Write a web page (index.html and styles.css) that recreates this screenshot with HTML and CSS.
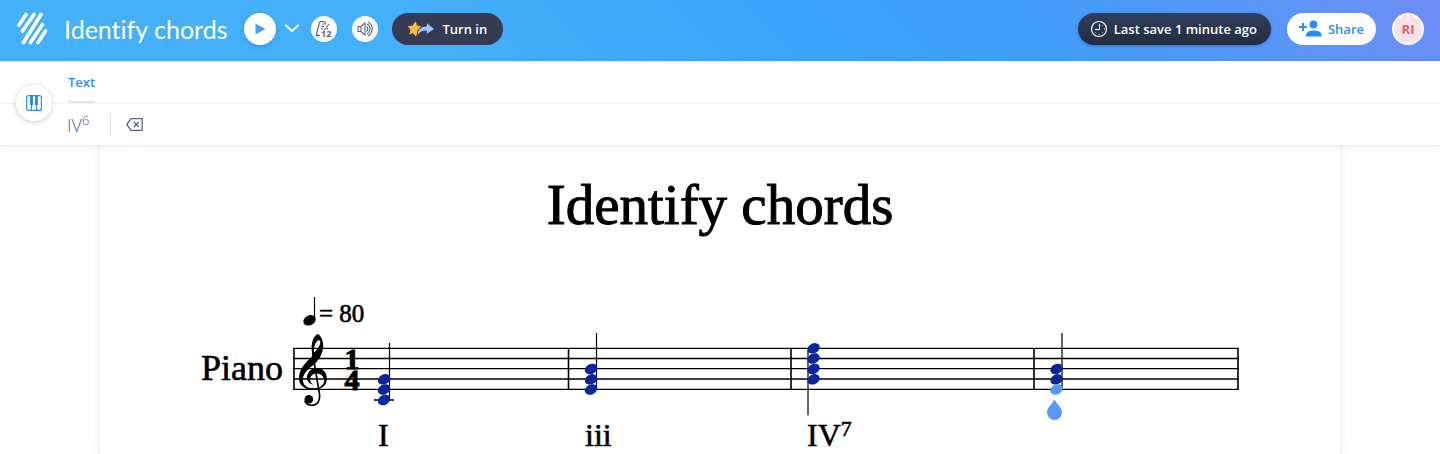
FILE: index.html
```html
<!DOCTYPE html>
<html lang="en">
  <head>
    <meta charset="UTF-8" />
    <meta name="viewport" content="width=device-width, initial-scale=1.0" />
    <title>Identify chords</title>
    <link rel="stylesheet" href="styles.css">
  </head>
  <body>
    <header class="topbar">
      <a href="#" class="logo" aria-label="Home">
        <svg width="32" height="34" viewBox="0 0 32 34" fill="none" stroke="#fff" stroke-width="3.6" stroke-linecap="round">
          <path d="M3 13 10 2.500M6.500 19 18 2.500M7.500 30.500 25 2.500M14.500 30.500 26.500 12.500M22 30.500 29.500 19" />
        </svg>
      </a>
      <h2 class="doc-title">Identify chords</h2>
      <div class="player">
        <button type="button" class="round play" aria-label="Play">
          <svg width="12" height="12" viewBox="0 0 12 12"><path d="M1.500 0.500 11.500 6 1.500 11.500z" fill="#4f9cfb" /></svg>
        </button>
        <button type="button" class="arrow" aria-label="Playback options">
          <svg width="16" height="9" viewBox="0 0 16 9" fill="none" stroke="#fff" stroke-width="2" stroke-linecap="round" stroke-linejoin="round"><path d="M2 1.500 8 7 14 1.500" /></svg>
        </button>
        <button type="button" class="round small" aria-label="Metronome">
          <svg width="20" height="22" viewBox="0 -2 20 22" fill="none" stroke="#5b6485" stroke-width="1.100">
            <path d="M3 12.500 5.500 2.500Q5.800 1.500 7 1.500H10Q11 1.500 11.200 2.500L11.500 4.500M3 12.500 2.200 15.500H6M8 4H10.500M7.500 6.500H10M7 9H9.500M10 10.500 15 4M12 6.500 14 9.500" />
            <path d="M3.500 13.800V17.200L5.500 15.500z" fill="#5b6485" stroke="none" />
            <text x="7" y="17" class="count">12</text>
          </svg>
        </button>
        <button type="button" class="round small" aria-label="Volume">
          <svg width="16" height="16" viewBox="0 0 16 16" fill="none" stroke="#5b6485" stroke-width="1.100">
            <path d="M1 5.500H4V10.500H1zM4 5.500 8 2V14L4 10.500M9.500 5.500Q12 8 9.500 10.500M10 3Q13.500 5 13 8.500 12.500 11.500 10 13M11 1Q15.500 3.500 15.300 8.500 14.500 13 11 15" />
          </svg>
        </button>
      </div>
      <button type="button" class="pill turn-in">
        <svg width="28" height="16" viewBox="0 0 28 16">
          <path d="M7.500 1 8.500 5 12.500 5.500 9.500 9 8 15 5 11.500 2 13 3 9 0.500 5.500 5 5z" fill="#f9bb43" stroke="#f9bb43" stroke-linejoin="round" />
          <path d="M9 15.500Q9 5 18.500 5V1.500L26.500 8 18.500 13.500V10Q12 9.500 9 15.500z" fill="#a2c1fb" stroke="#343b52" stroke-width="0.800" />
        </svg>
        Turn in
      </button>
      <div class="actions">
        <button type="button" class="pill saved">
          <svg width="18" height="18" viewBox="0 0 18 18" fill="none" stroke="#fff">
            <circle cx="9" cy="9" r="7.500" stroke-width="1.200" />
            <path d="M9.500 4V9.500H5" />
            <path d="M9 14V15M14 9H15M12.500 5.500 13 5M12.500 12.500 13 13M5 13 5.500 12.500" />
          </svg>
          Last save 1 minute ago
        </button>
        <button type="button" class="pill share">
          <svg width="23" height="17" viewBox="0 0 23 17" fill="#2b8df3">
            <circle cx="14.500" cy="4.500" r="4" />
            <path d="M7 16.500V14.500Q8 10.500 14.800 10.500T22.500 14.500V16.500z" />
            <path d="M3 3H5V6H8V8H5V11H3V8H0V6H3z" />
          </svg>
          Share
        </button>
        <button type="button" class="avatar">RI</button>
      </div>
    </header>

    <nav class="toolbar">
      <button type="button" class="instrument" aria-label="Piano">
        <svg width="16" height="16" viewBox="0 0 16 16" fill="none" stroke="#2b8df3">
          <rect x="0.600" y="0.600" width="14.800" height="14.800" rx="2" stroke-width="1.200" />
          <path d="M5.500 10V15M10.500 10V15" />
          <path d="M4 1H7V10H4zM9 1H12V10H9z" fill="#2b8df3" stroke="none" />
        </svg>
      </button>
      <div class="tabs">
        <a href="#" class="tab">Text</a>
      </div>
      <div class="tools">
        <button type="button" class="roman">IV<sup>6</sup></button>
        <span class="divider"></span>
        <button type="button" class="clear" aria-label="Clear">
          <svg width="17" height="13" viewBox="0 0 17 13" fill="none" stroke="#5b6485" stroke-width="1.300">
            <path d="M5 0.700H16.200V12.300H5L0.800 6.500z" stroke-linejoin="round" />
            <path d="M7.800 4 12.800 9M12.800 4 7.800 9" />
          </svg>
        </button>
      </div>
    </nav>

    <main class="workspace">
      <section class="sheet">
        <h1>Identify chords</h1>
        <svg class="score" viewBox="100 285 1240 220">
          <defs>
            <ellipse id="head" rx="6.500" ry="4.900" transform="rotate(-26)" />
          </defs>

          <!-- tempo -->
          <use href="#head" x="309.500" y="320.300" />
          <path class="stem" d="M314.500 297V320" />
          <text x="319" y="322" font-size="25">= 80</text>
          <text x="201" y="380" font-size="36">Piano</text>

          <!-- staff and barlines -->
          <path class="line" d="M293 348.300H1239M293 358.500H1239M293 368.700H1239M293 379H1239M293 389.300H1239M374 400H394" />
          <path class="bar" d="M294 348V390M568.500 348V390M791 348V390M1034 348V390M1238 348V390" />

          <!-- treble clef -->
          <g transform="translate(190 285) scale(0.333)">
            <path fill-rule="evenodd" d="M383 147C372 152 362 175 366 200L368 213C350 230 327 250 327 281C327 302 346 315 370 315C394 315 411 302 411 281C411 263 399 249 382 249C364 249 351 262 351 278C351 288 358 297 370 300C362 293 360 288 361 283C362 272 370 266 380 266C394 266 403 276 403 288C401 302 388 310 372 310C350 310 338 300 339 283C340 265 356 252 376 236C392 219 400 202 400 182C400 165 392 150 383 147ZM388 165C393 169 392 177 387 185C383 193 377 199 373 203C370 188 375 170 388 165Z" />
            <path d="M368 205 388 322C393 348 382 361 366 361C355 361 347 356 345 347" fill="none" stroke="#000" stroke-width="5" />
            <circle cx="357" cy="343" r="13" />
          </g>
          <text class="meter" y="369"><tspan x="352">1</tspan><tspan x="352" dy="21">4</tspan></text>

          <!-- chords -->
          <path class="stem" d="M389.500 343V400M596.500 333V389M808 348V415.500M1062 333V389" />
          <g class="notes">
            <use href="#head" x="384" y="379.300" />
            <use href="#head" x="384" y="389.500" />
            <use href="#head" x="384" y="400" />
            <use href="#head" x="591" y="369" />
            <use href="#head" x="591" y="379.300" />
            <use href="#head" x="591" y="389.500" />
            <use href="#head" x="813.500" y="348.300" />
            <use href="#head" x="813.500" y="358.500" />
            <use href="#head" x="813.500" y="369" />
            <use href="#head" x="813.500" y="379.300" />
            <use href="#head" x="1056.500" y="369" />
            <use href="#head" x="1056.500" y="379.300" />
            <use href="#head" x="1056.500" y="389.500" class="selected" />
          </g>
          <path class="selected" d="M1054.500 399.500C1057 404 1062 408 1062 412.500A7.500 7.500 0 0 1 1047 412.500C1047 408 1052 404 1054.500 399.500z" />

          <!-- chord names -->
          <text x="378" y="446" font-size="32">I</text>
          <text x="585" y="446" font-size="32">iii</text>
          <text x="807" y="446" font-size="32">IV<tspan font-size="22" dy="-10">7</tspan></text>
        </svg>
      </section>
    </main>
  </body>
</html>
```

FILE: styles.css
```css
* {
  box-sizing: border-box;
}
body {
  margin: 0;
  height: 100vh;
  display: flex;
  flex-direction: column;
  overflow: hidden;
  background-color: #fff;
  font-family: "Open Sans", sans-serif;
}
button {
  display: flex;
  align-items: center;
  justify-content: center;
  flex-shrink: 0;
  padding: 0;
  border: none;
  background: none;
  font-family: inherit;
  cursor: pointer;
}
.topbar {
  display: flex;
  align-items: center;
  flex-shrink: 0;
  height: 61px;
  padding: 0 16px 4px;
  background: linear-gradient(45deg, #44b0f9 30%, #3aa4fb 55%, #3f9ef8 70%, #5896f8 86%, #708cf5 100%);
}
.logo {
  display: flex;
  margin-right: 16px;
}
.doc-title {
  margin: 0;
  color: #fff;
  font-family: Lato, sans-serif;
  font-size: 25px;
  font-variant-ligatures: none;
  font-weight: 400;
  line-height: 30px;
  white-space: nowrap;
}
.player {
  display: flex;
  align-items: center;
  margin: 0 14px 0 16px;
}
.round {
  border-radius: 50%;
  background-color: #fff;
}
.play {
  width: 32px;
  height: 32px;
  box-shadow: 0 2px 5px rgba(30, 80, 140, 0.25);
}
.arrow {
  margin: 0 11px 0 8px;
}
.small {
  width: 26px;
  height: 26px;
}
.small + .small {
  margin-left: 15px;
}
.count {
  fill: #5b6485;
  stroke: none;
  font-size: 9px;
  font-weight: 700;
}
.pill {
  height: 32px;
  border-radius: 16px;
  font-size: 13px;
  font-weight: 600;
  white-space: nowrap;
}
.turn-in {
  gap: 7px;
  padding: 0 16px;
  background-color: #343b52;
  color: #fff;
}
.actions {
  display: flex;
  align-items: center;
  gap: 16px;
  margin-left: auto;
}
.saved {
  gap: 6px;
  padding: 0 14px 0 12px;
  background: linear-gradient(#33415f, #222b3f);
  box-shadow: 0 1px 3px rgba(30, 50, 100, 0.4);
  color: #fff;
}
.share {
  gap: 6px;
  padding: 0 12px;
  background-color: #fff;
  color: #2b8df3;
}
.avatar {
  width: 32px;
  height: 32px;
  border: 2px solid #fff;
  border-radius: 50%;
  background-color: #fae3e6;
  color: #de6068;
  font-size: 13px;
  font-weight: 700;
}
.toolbar {
  position: relative;
  z-index: 1;
  flex-shrink: 0;
  background-color: #fff;
  box-shadow: 0 1px 5px rgba(0, 0, 0, 0.1);
}
.instrument {
  position: absolute;
  top: 24px;
  left: 16px;
  width: 36px;
  height: 36px;
  border-radius: 50%;
  background-color: #fff;
  box-shadow: 0 1px 5px rgba(50, 50, 90, 0.25);
}
.tabs {
  display: flex;
  height: 43px;
  padding-left: 68px;
  border-bottom: 1px solid #f2f2f5;
}
.tab {
  border-bottom: 2px solid #e4e4ec;
  color: #2b8df3;
  font-size: 13px;
  font-weight: 600;
  line-height: 42px;
  text-decoration: none;
}
.tools {
  display: flex;
  align-items: center;
  height: 41px;
  padding-left: 67px;
}
.roman {
  align-items: flex-start;
  color: #5b6485;
  font-size: 18px;
  font-weight: 300;
  line-height: 24px;
}
.roman sup {
  font-size: 13px;
  line-height: 14px;
}
.divider {
  width: 1px;
  height: 22px;
  margin: 0 15px 0 21px;
  background-color: #dadbe3;
}
.workspace {
  flex: 1;
  min-height: 0;
  padding: 0 100px;
}
.sheet {
  height: 100%;
  overflow: hidden;
  background-color: #fff;
  box-shadow: 0 0 10px rgba(0, 0, 0, 0.1);
  color: #000;
  font-family: "Liberation Serif", serif;
}
h1 {
  margin: 28px 0 48px;
  font-size: 57px;
  font-weight: 400;
  line-height: 64px;
  text-align: center;
  -webkit-text-stroke: 1px #000;
}
.score {
  display: block;
  width: 100%;
}
.score text {
  stroke: #000;
  stroke-width: 0.6;
}
.score .meter {
  font-size: 30px;
  font-weight: 700;
  text-anchor: middle;
  stroke-width: 1;
}
.line {
  stroke: #000;
  stroke-width: 1.3;
}
.bar {
  stroke: #000;
  stroke-width: 1.6;
}
.stem {
  stroke: #000;
  stroke-width: 1.2;
}
.notes {
  fill: #0c2699;
}
.selected {
  fill: #5797f9;
}
```
